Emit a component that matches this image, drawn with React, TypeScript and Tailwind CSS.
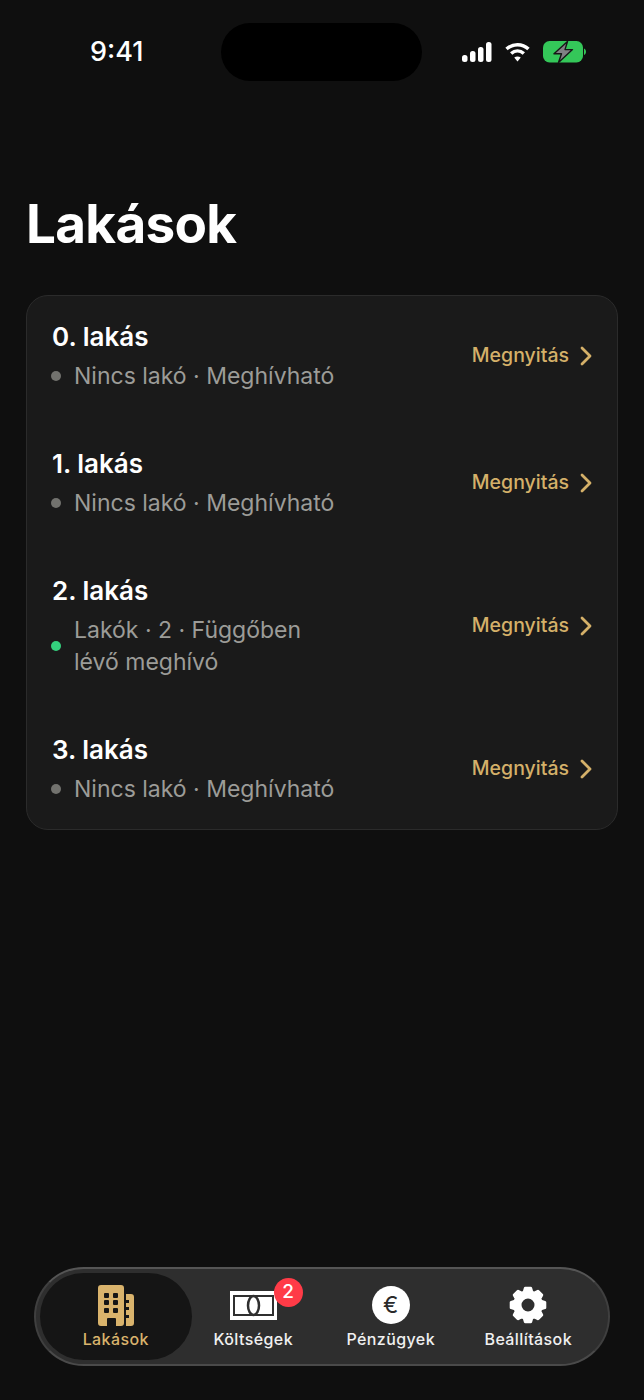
import { ChevronRight } from "lucide-react";

const apartments = [
    { title: "0. lakás", status: "Nincs lakó · Meghívható", active: false },
    { title: "1. lakás", status: "Nincs lakó · Meghívható", active: false },
    { title: "2. lakás", status: "Lakók · 2 · Függőben lévő meghívó", active: true },
    { title: "3. lakás", status: "Nincs lakó · Meghívható", active: false },
];

function gearPath(cx: number, cy: number, outer: number, inner: number, hole: number, teeth: number) {
    let d = "";
    const step = (Math.PI * 2) / teeth;
    for (let i = 0; i < teeth; i++) {
        const a = i * step - Math.PI / 2;
        const pts = [
            [inner, a - step * 0.36],
            [outer, a - step * 0.2],
            [outer, a + step * 0.2],
            [inner, a + step * 0.36],
        ];
        pts.forEach(([r, t], j) => {
            const x = (cx + r * Math.cos(t)).toFixed(2);
            const y = (cy + r * Math.sin(t)).toFixed(2);
            d += `${i === 0 && j === 0 ? "M" : "L"}${x} ${y} `;
        });
    }
    d += `Z M${cx + hole} ${cy} A${hole} ${hole} 0 1 0 ${cx - hole} ${cy} A${hole} ${hole} 0 1 0 ${cx + hole} ${cy} Z`;
    return d;
}

function StatusIcons() {
    return (
        <div className="flex items-center gap-[13px]">
            <svg width="30" height="20" viewBox="0 0 30 20" fill="white">
                <rect x="0" y="13" width="5.5" height="7" rx="2.5" />
                <rect x="8" y="9" width="5.5" height="11" rx="2.5" />
                <rect x="16" y="5" width="5.5" height="15" rx="2.5" />
                <rect x="24" y="0" width="5.5" height="20" rx="2.5" />
            </svg>
            <svg width="25" height="20" viewBox="0 0 26 20" fill="none" stroke="white" strokeWidth="3.6">
                <path d="M1.6 7 C8 0.8 18 0.8 24.4 7" />
                <path d="M6.4 11.6 C10.4 8 15.6 8 19.6 11.6" />
                <path d="M13 20 L9.6 15.8 C11.6 14.2 14.4 14.2 16.4 15.8 Z" fill="white" stroke="none" />
            </svg>
            <svg width="43" height="22" viewBox="0 0 43 22">
                <rect x="0" y="0" width="40" height="21.5" rx="6.5" fill="#34c759" />
                <path d="M41 7.5 C42.2 8 43 9.2 43 10.8 C43 12.4 42.2 13.6 41 14 Z" fill="#34c759" />
                <path d="M24.5 0.5 L11 12.8 H18.5 L15.5 21.5 L29.5 8.6 H22 Z" fill="#808084" stroke="#161616" strokeWidth="1.4" strokeLinejoin="round" />
            </svg>
        </div>
    );
}

function BuildingIcon() {
    return (
        <svg width="36" height="41" viewBox="0 0 36 41" fill="#d9b36c">
            <path fillRule="evenodd" d="M3 0 H23 A3 3 0 0 1 26 3 V38 A3 3 0 0 1 23 41 H3 A3 3 0 0 1 0 38 V3 A3 3 0 0 1 3 0 Z M7 8 A1 1 0 0 0 6 9 V12 A1 1 0 0 0 7 13 H10 A1 1 0 0 0 11 12 V9 A1 1 0 0 0 10 8 Z M16 8 A1 1 0 0 0 15 9 V12 A1 1 0 0 0 16 13 H19 A1 1 0 0 0 20 12 V9 A1 1 0 0 0 19 8 Z M7 15 A1 1 0 0 0 6 16 V19 A1 1 0 0 0 7 20 H10 A1 1 0 0 0 11 19 V16 A1 1 0 0 0 10 15 Z M16 15 A1 1 0 0 0 15 16 V19 A1 1 0 0 0 16 20 H19 A1 1 0 0 0 20 19 V16 A1 1 0 0 0 19 15 Z M7 23 A1 1 0 0 0 6 24 V27 A1 1 0 0 0 7 28 H10 A1 1 0 0 0 11 27 V24 A1 1 0 0 0 10 23 Z M16 23 A1 1 0 0 0 15 24 V27 A1 1 0 0 0 16 28 H19 A1 1 0 0 0 20 27 V24 A1 1 0 0 0 19 23 Z M10 33 A1 1 0 0 0 9 34 V41 H18 V34 A1 1 0 0 0 17 33 Z" />
            <path d="M28 9 H33 A3 3 0 0 1 36 12 V38 A3 3 0 0 1 33 41 H28 V33 H31 V30 H28 V25 H31 V22 H28 V18 H31 V15 H28 Z" />
        </svg>
    );
}

function BanknoteIcon() {
    return (
        <svg width="47" height="29" viewBox="0 0 47 29">
            <rect x="0" y="0" width="47" height="29" fill="white" />
            <rect x="3" y="4" width="41" height="21" fill="#2f2f2f" />
            <rect x="5" y="6" width="37" height="17" fill="white" />
            <ellipse cx="23.5" cy="14.5" rx="5.5" ry="9.5" fill="white" stroke="#2f2f2f" strokeWidth="2.5" />
        </svg>
    );
}

function EuroIcon() {
    return (
        <div className="flex h-[38px] w-[38px] items-center justify-center rounded-full bg-white text-[23px] leading-none font-normal text-[#2a2a2a]">
            €
        </div>
    );
}

function GearIcon() {
    return (
        <svg width="40" height="40" viewBox="0 0 40 40">
            <path fillRule="evenodd" fill="white" stroke="white" strokeWidth="3" strokeLinejoin="round" d={gearPath(20, 20, 17, 13.5, 8, 8)} />
        </svg>
    );
}

const tabs = [
    { label: "Lakások", icon: <BuildingIcon />, active: true },
    { label: "Költségek", icon: <BanknoteIcon />, badge: 2 },
    { label: "Pénzügyek", icon: <EuroIcon /> },
    { label: "Beállítások", icon: <GearIcon /> },
];

export default function App() {
    return (
        <div className="flex h-[1400px] w-[644px] flex-col overflow-hidden bg-[#0f0f0f] font-['Inter',sans-serif] text-white">
            <div className="relative flex h-[104px] items-center justify-between pr-[58px] pl-[90px]">
                <span className="pt-[1px] text-[27px] font-medium">9:41</span>
                <div className="absolute top-[23px] left-[221px] h-[58px] w-[201px] rounded-[29px] bg-black" />
                <StatusIcons />
            </div>

            <h1 className="mx-[26px] mt-[84px] text-[53px] leading-[72px] font-bold tracking-[-0.7px]">Lakások</h1>

            <div className="mx-[26px] mt-[35px] flex flex-col gap-[55px] rounded-[22px] border border-[#2b2b2b] bg-[#1a1a1a] p-6">
                {apartments.map((apt) => (
                    <div key={apt.title} className="flex items-center justify-between">
                        <div className="flex flex-col gap-[6px]">
                            <div className="pl-[1px] text-[26px] leading-[34px] font-semibold">{apt.title}</div>
                            <div className="flex items-center gap-[13px]">
                                <span className={`h-[10px] w-[10px] shrink-0 rounded-full ${apt.active ? "bg-[#34d17e]" : "bg-[#72726e]"}`} />
                                <span className="w-[270px] text-[23px] leading-[32px] text-[#9c9c98]">{apt.status}</span>
                            </div>
                        </div>
                        <div className="flex items-center gap-[1px] text-[#d4b069]">
                            <span className="text-[19.5px] font-medium">Megnyitás</span>
                            <ChevronRight size={32} strokeWidth={2.1} className="-mr-[9px]" />
                        </div>
                    </div>
                ))}
            </div>

            <div className="mx-[34px] mt-auto mb-[34px] grid h-[99px] grid-cols-4 rounded-full border-2 border-x-[#3f3f3f] border-t-[#555555] border-b-[#4a4a4a] bg-[#2e2e2e] px-[11px] py-[4px]">
                {tabs.map((tab) => (
                    <div
                        key={tab.label}
                        className={`relative flex flex-col items-center justify-end gap-[1px] rounded-full pb-[11px] ${tab.active ? "-mx-[7px] bg-[#151515] text-[#d9b36c]" : "text-[#f0f0f0]"}`}
                    >
                        <div className="flex h-[46px] items-center justify-center">{tab.icon}</div>
                        <span className="text-[16px] leading-[20px] font-medium tracking-[0.4px]">{tab.label}</span>
                        {tab.badge && (
                            <span className="absolute top-[5px] left-[89px] flex h-[29px] w-[29px] items-center justify-center rounded-full bg-[#ff3b47] text-[19px] font-medium text-white">
                                {tab.badge}
                            </span>
                        )}
                    </div>
                ))}
            </div>
        </div>
    );
}
